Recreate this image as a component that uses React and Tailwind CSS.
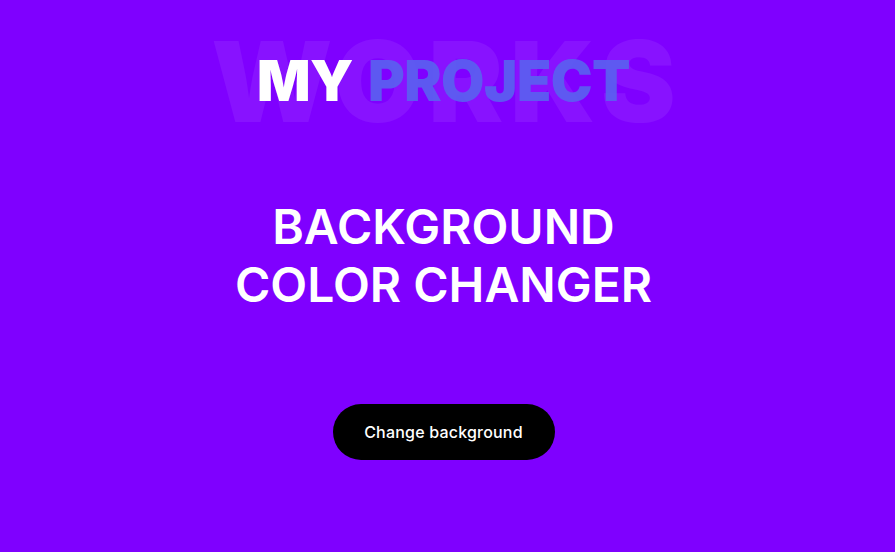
export default function App() {
  return (
    <div className="w-[895px] h-[552px] bg-[#7f00ff] overflow-hidden" style={{ fontFamily: "Inter, 'Noto Sans', sans-serif" }}>
      <div className="w-[887px] h-full flex flex-col items-center">
        <div className="relative mt-[36px] h-[90px] w-full flex justify-center">
          <div className="absolute inset-0 flex justify-center items-center">
            <span className="text-[112px] leading-[90px] font-black text-white/[0.07] tracking-[7px] pl-[7px]">WORKS</span>
          </div>
          <div className="relative flex items-center gap-[15px] h-[90px] text-[56px] font-black tracking-[-0.5px]">
            <span className="text-white">MY</span>
            <span className="text-[#5a62f0]/90">PROJECT</span>
          </div>
        </div>
        <h1 className="mt-[72px] text-white text-[48px] leading-[58px] font-semibold text-center">
          BACKGROUND<br />COLOR CHANGER
        </h1>
        <button className="mt-[90px] w-[222px] h-[56px] rounded-full bg-black text-white text-[16px] font-medium tracking-[0.2px]">
          Change background
        </button>
      </div>
    </div>
  );
}
